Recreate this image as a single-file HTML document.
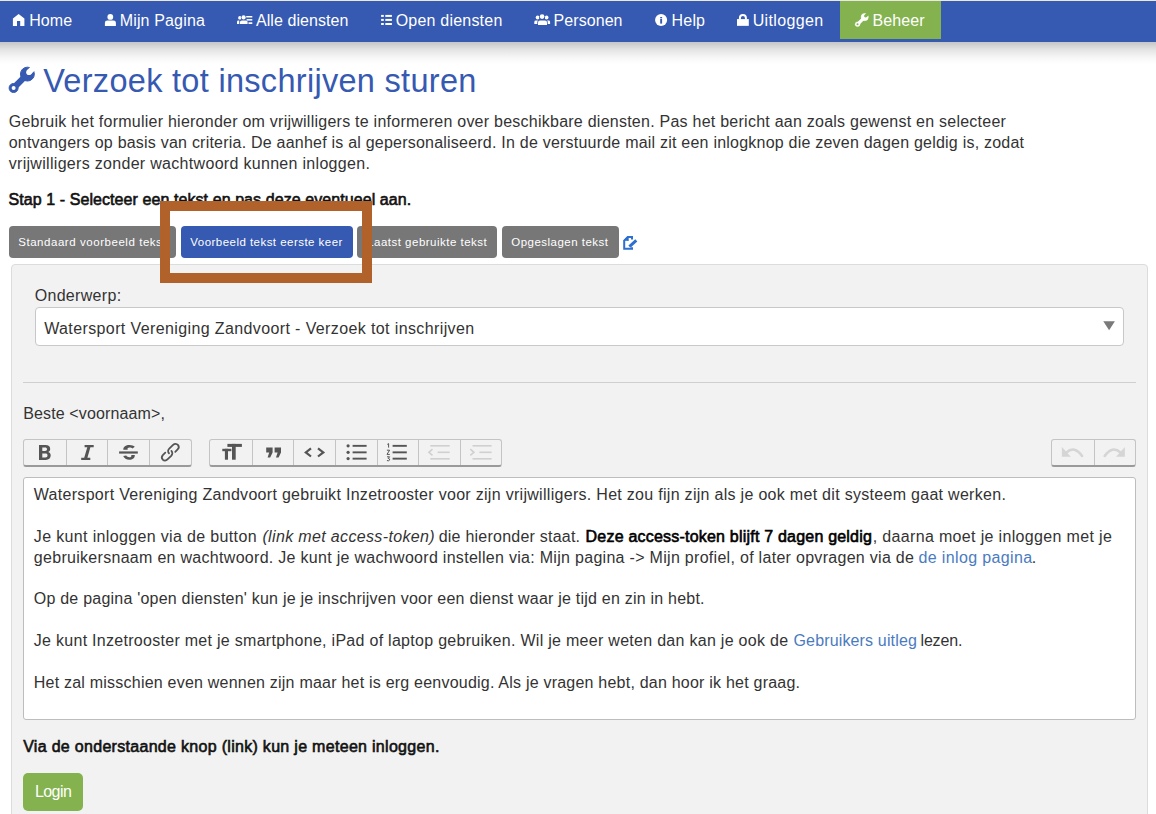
<!DOCTYPE html>
<html><head><meta charset="utf-8">
<style>
html,body{margin:0;padding:0;width:1156px;height:814px;overflow:hidden;background:#fff;font-family:"Liberation Sans",sans-serif;}
.t{position:absolute;white-space:pre;}
.abs{position:absolute;}
#topline{left:0;top:0;width:1156px;height:1px;background:#ebe8e4;}
#nav{left:0;top:1px;width:1156px;height:41px;background:#3659b1;}
#navshadow{left:0;top:42px;width:1156px;height:22px;background:linear-gradient(#c6c6c6,#e4e4e4 35%,#f6f6f6 70%,#fff);}
#beheer{left:840px;top:1px;width:101px;height:38px;background:#83b24f;}
.btn{position:absolute;top:226px;height:32px;border-radius:4px;background:#777;}
#panel{left:11px;top:264px;width:1135px;height:600px;background:#f2f2f2;border:1px solid #dcdcdc;border-radius:4px;}
#subject{left:35px;top:307px;width:1087px;height:37px;background:#fff;border:1px solid #c8c8c8;border-radius:4px;}
#hr{left:23px;top:382px;width:1113px;height:1px;background:#cfcfcf;}
.tb{position:absolute;top:439px;height:25px;border:1px solid #c4c4c4;border-bottom:2px solid #9a9a9a;border-radius:3px;background:#f2f2f2;}
.div{position:absolute;top:0;width:1px;height:25px;background:#c4c4c4;}
#editor{left:23px;top:477px;width:1111px;height:241px;background:#fff;border:1px solid #bdbdbd;border-radius:3px;}
#login{left:23px;top:773px;width:60px;height:38px;background:#83b24f;border-radius:5px;}
#orange{left:160px;top:201px;width:192px;height:62px;border:10px solid #b1612a;}
svg{position:absolute;overflow:visible;}
</style></head><body>
<div id="topline" class="abs"></div>
<div id="nav" class="abs"></div>
<div id="navshadow" class="abs"></div>
<div id="beheer" class="abs"></div>

<div class="btn" style="left:9px;width:167px"></div>
<div class="btn" style="left:181px;width:172px;background:#3659b1"></div>
<div class="btn" style="left:357px;width:140px"></div>
<div class="btn" style="left:502px;width:117px"></div>

<div id="panel" class="abs"></div>
<div id="subject" class="abs"></div>
<div id="hr" class="abs"></div>

<div class="tb" style="left:23px;width:167px"><div class="div" style="left:42px"></div><div class="div" style="left:83px"></div><div class="div" style="left:125px"></div></div>
<div class="tb" style="left:209px;width:291px"><div class="div" style="left:42px"></div><div class="div" style="left:83px"></div><div class="div" style="left:125px"></div><div class="div" style="left:167px"></div><div class="div" style="left:208px"></div><div class="div" style="left:250px"></div></div>
<div class="tb" style="left:1051px;width:83px"><div class="div" style="left:42px"></div></div>

<div id="editor" class="abs"></div>
<div id="login" class="abs"></div>

<svg width="1156" height="814" style="left:0;top:0" viewBox="0 0 1156 814">
<defs>
<g id="wrench">
<mask id="wm"><rect x="-5" y="-5" width="40" height="40" fill="#fff"/><circle cx="19.9" cy="5.2" r="2.8" fill="#000"/><polygon points="17.9,3.2 28.3,-7.2 32.3,-3.2 21.9,7.2" fill="#000"/><circle cx="4.5" cy="20.9" r="2.0" fill="#000"/></mask>
<g mask="url(#wm)">
<circle cx="18.3" cy="7.0" r="6.95"/>
<path d="M18.3,7 L4.5,20.9" stroke-width="6.2" stroke-linecap="round"/>
<circle cx="4.5" cy="20.9" r="4.5"/>
</g>
</g>
</defs>
<!-- nav icons -->
<g fill="#fff">
<polygon points="12.9,18.4 18.65,13.9 24.4,18.4 24.4,26 20.2,26 20.2,21 17,21 17,26 12.9,26"/>
<circle cx="110.3" cy="16.9" r="2.9"/>
<path d="M104.9,26 V22.8 Q104.9,20.5 107.4,20.5 H113.4 Q115.9,20.5 115.9,22.8 V26 Z"/>
<circle cx="239.9" cy="17.9" r="1.8"/>
<path d="M237,24 V21.8 Q237,20.5 238.4,20.5 H240.5 V24 Z"/>
<circle cx="243.6" cy="17.4" r="2.7" fill="#3659b1"/>
<rect x="239.3" y="19.7" width="9" height="5" fill="#3659b1"/>
<circle cx="243.6" cy="17.4" r="2.1"/>
<path d="M240,24 V22 Q240,20.4 241.7,20.4 H245.9 Q247.6,20.4 247.6,22 V24 Z"/>
<rect x="246.2" y="16" width="6.1" height="1.5"/>
<rect x="246.6" y="19.1" width="5.7" height="1.5"/>
<rect x="248.5" y="22.3" width="3.8" height="1.7"/>
<rect x="381.1" y="14.9" width="2.7" height="2"/><rect x="385.3" y="14.9" width="6.6" height="2"/>
<rect x="381.1" y="18.9" width="2.7" height="2"/><rect x="385.3" y="18.9" width="6.6" height="2"/>
<rect x="381.1" y="23" width="2.7" height="2"/><rect x="385.3" y="23" width="6.6" height="2"/>
<circle cx="537.6" cy="17.5" r="1.9"/>
<path d="M534.3,24 V22 Q534.3,20.6 535.8,20.6 H538.5 V24 Z"/>
<circle cx="546.6" cy="17.5" r="1.9"/>
<path d="M546,24 V20.6 H548.6 Q550.1,20.6 550.1,22 V24 Z"/>
<circle cx="542.1" cy="16.6" r="3.0" fill="#3659b1"/>
<path d="M537.3,25.5 V22.1 Q537.3,19.7 539.8,19.7 H544.6 Q547.7,19.7 547.7,22.1 V25.5 Z" fill="#3659b1"/>
<circle cx="542.1" cy="16.6" r="2.35"/>
<path d="M538,25 V22.3 Q538,20.4 540,20.4 H545 Q547,20.4 547,22.3 V25 Z"/>
<circle cx="661.1" cy="19.95" r="6.05"/>
<rect x="737" y="19.1" width="11.8" height="6.75"/>
<path d="M739.9,19.6 V17.9 A3,3 0 0 1 745.9,17.9 V19.6" fill="none" stroke="#fff" stroke-width="2"/>
<use href="#wrench" transform="translate(855.2,13.4) scale(0.52)" stroke="#fff"/>
</g>
<rect x="660.2" y="17.0" width="1.9" height="1.2" fill="#3659b1"/>
<rect x="660.2" y="18.8" width="1.9" height="4.8" fill="#3659b1"/>
<!-- title wrench -->
<use href="#wrench" transform="translate(9.1,67.1)" fill="#3659b1" stroke="#3659b1"/>
<!-- edit icon -->
<g fill="#2d6fd1" stroke="#2d6fd1">
<path d="M632,239.6 V237 H627.8 L624.2,240.6 V248.8 H632 V247.2" fill="none" stroke-width="2"/>
<polygon points="623.4,240.6 627.4,236.2 628.7,236.2 628.7,240.9" stroke="none"/>
<path d="M629.4,246.6 L636.3,240.3" stroke-width="3"/>
</g>
<!-- dropdown -->
<polygon points="1103.3,321.3 1114.9,321.3 1109.1,330.2" fill="#7a7a7a"/>
<!-- toolbar -->
<g fill="#555" stroke="none">
<path fill-rule="evenodd" d="M39,445 H45.5 C48.6,445 50.2,446.6 50.2,449 C50.2,450.5 49.4,451.5 48.2,452.1 C49.8,452.6 50.7,453.9 50.7,455.6 C50.7,458.3 48.8,460 45.8,460 H39 Z M42.3,447.6 V451 H45 C46.3,451 47,450.4 47,449.3 C47,448.2 46.3,447.6 45,447.6 Z M42.3,453.5 V457.4 H45.4 C46.8,457.4 47.5,456.7 47.5,455.4 C47.5,454.1 46.8,453.5 45.4,453.5 Z"/>
<path d="M84.6,445 H93.7 V447.3 H90.4 L87.4,457.7 H90.3 V460 H81.2 V457.7 H84.2 L87.3,447.3 H84.6 Z"/>
<path d="M123.3,449.8 C123.1,446.6 125.9,444.9 129.5,444.9 C131.8,444.9 133.6,445.6 134.8,446.7 L132.5,448.6 C131.8,447.8 130.8,447.5 129.6,447.5 C128,447.5 127.1,448.3 127.7,449.8 Z"/>
<path d="M123.2,456.1 L126.2,455.6 C127,456.9 128.1,457.3 129.3,457.3 C130.9,457.3 131.7,456.4 131.3,455 L134.8,455 C135,458.1 132.6,459.8 129.2,459.8 C126.4,459.8 124.2,458.5 123.2,456.1 Z"/>
<rect x="119.1" y="451.4" width="18.7" height="2.2"/>
<path transform="translate(170,452.4) scale(0.94) translate(-170,-452.4)" d="M168.9,453.3 C167.5,451.9 167.7,449.8 169.2,448.3 L173.3,444.3 C174.9,442.8 177.1,442.9 178.4,444.4 C179.7,445.9 179.5,447.9 178.1,449.3 L175.6,451.8 M165,452.6 L162.6,455 C161.1,456.5 161,458.6 162.3,460 C163.7,461.4 165.8,461.4 167.3,459.9 L171.3,456 C172.8,454.5 172.9,452.3 171.5,450.9" fill="none" stroke="#555" stroke-width="1.9" stroke-linecap="round"/>
<rect x="222.3" y="448.8" width="9.1" height="2.4"/><rect x="224.9" y="448.8" width="3.1" height="10.9"/>
<rect x="227.4" y="443.9" width="14.5" height="3"/><rect x="232" y="443.9" width="3.7" height="15.8"/>
<path d="M266.2,447.4 H272.6 V452.5 L270.2,457.6 H267.6 L269.2,452.5 H266.2 Z"/>
<path d="M274.6,447.4 H281 V452.5 L278.6,457.6 H276 L277.6,452.5 H274.6 Z"/>
<path d="M311,448.3 L305.8,452.4 L311,456.5 M318,448.3 L323.3,452.4 L318,456.5" fill="none" stroke="#555" stroke-width="2.2"/>
<circle cx="348.1" cy="445.8" r="1.6"/><circle cx="348.1" cy="452.3" r="1.6"/><circle cx="348.1" cy="458.6" r="1.6"/>
<rect x="352.6" y="444.9" width="14" height="1.9"/><rect x="352.6" y="451.4" width="14" height="1.9"/><rect x="352.6" y="457.7" width="14" height="1.9"/>
<path d="M387.3,444.4 L388.6,443.6 V447.6 M386.9,450.2 H389.6 L387,454.4 H389.8 M387,456.8 H389.6 L388.2,458.4 Q389.9,458.6 389.7,460 Q389.2,461.2 386.9,460.6" fill="none" stroke="#555" stroke-width="1"/>
<rect x="392.6" y="444.9" width="14.2" height="1.9"/><rect x="392.6" y="451.4" width="14.2" height="1.9"/><rect x="392.6" y="457.7" width="14.2" height="1.9"/>
</g>
<g fill="#d0d0d0">
<rect x="430.3" y="445" width="19.4" height="1.6"/><rect x="437.6" y="451.5" width="12.1" height="1.6"/><rect x="430.3" y="458" width="19.4" height="1.6"/>
<path d="M432.5,449.2 L428.9,452.3 L432.5,455.4" fill="none" stroke="#d0d0d0" stroke-width="1.6"/>
<rect x="472.5" y="445" width="19.1" height="1.6"/><rect x="479.4" y="451.5" width="12.2" height="1.6"/><rect x="472.5" y="458" width="19.1" height="1.6"/>
<path d="M470.3,449.2 L473.9,452.3 L470.3,455.4" fill="none" stroke="#d0d0d0" stroke-width="1.6"/>
</g>
<g fill="#d5d5d5">
<polygon points="1061.9,447 1061.9,456.8 1070.8,456.8"/>
<path d="M1066.2,452.6 Q1074.5,445 1082.1,456" fill="none" stroke="#d5d5d5" stroke-width="2.6" stroke-linecap="round"/>
<polygon points="1124.9,447 1124.9,456.8 1116,456.8"/>
<path d="M1120.6,452.6 Q1112.3,445 1104.7,456" fill="none" stroke="#d5d5d5" stroke-width="2.6" stroke-linecap="round"/>
</g>
</svg>

<div class="t" style="left:29.2px;top:10.5px;font-size:16px;line-height:20px;letter-spacing:0.078px;color:#fff">Home</div>
<div class="t" style="left:119.7px;top:10.5px;font-size:16px;line-height:20px;letter-spacing:0.154px;color:#fff">Mijn Pagina</div>
<div class="t" style="left:256.0px;top:10.5px;font-size:16px;line-height:20px;letter-spacing:0.060px;color:#fff">Alle diensten</div>
<div class="t" style="left:395.7px;top:10.5px;font-size:16px;line-height:20px;letter-spacing:0.209px;color:#fff">Open diensten</div>
<div class="t" style="left:553.6px;top:10.5px;font-size:16px;line-height:20px;letter-spacing:0.062px;color:#fff">Personen</div>
<div class="t" style="left:671.6px;top:10.5px;font-size:16px;line-height:20px;letter-spacing:0.173px;color:#fff">Help</div>
<div class="t" style="left:752.7px;top:10.5px;font-size:16px;line-height:20px;letter-spacing:0.355px;color:#fff">Uitloggen</div>
<div class="t" style="left:872.6px;top:10.5px;font-size:16px;line-height:20px;letter-spacing:0.068px;color:#fff">Beheer</div>
<div class="t" style="left:43.2px;top:61.2px;font-size:32.5px;line-height:41px;letter-spacing:0.299px;color:#3659b1">Verzoek tot inschrijven sturen</div>
<div class="t" style="left:8.7px;top:111.8px;font-size:16px;line-height:20px;letter-spacing:0.246px;color:#333">Gebruik het formulier hieronder om vrijwilligers te informeren over beschikbare diensten. Pas het bericht aan zoals gewenst en selecteer</div>
<div class="t" style="left:8.7px;top:132.8px;font-size:16px;line-height:20px;letter-spacing:0.221px;color:#333">ontvangers op basis van criteria. De aanhef is al gepersonaliseerd. In de verstuurde mail zit een inlogknop die zeven dagen geldig is, zodat</div>
<div class="t" style="left:8.7px;top:153.8px;font-size:16px;line-height:20px;letter-spacing:0.305px;color:#333">vrijwilligers zonder wachtwoord kunnen inloggen.</div>
<div class="t" style="left:8.5px;top:190.1px;font-size:16px;line-height:20px;letter-spacing:0.078px;color:#111"><span style="-webkit-text-stroke:0.6px #111">Stap 1 - Selecteer een tekst en pas deze eventueel aan.</span></div>
<div class="t" style="left:18.2px;top:234.7px;font-size:11.5px;line-height:14px;letter-spacing:0.549px;color:#fff">Standaard voorbeeld tekst</div>
<div class="t" style="left:190.3px;top:234.7px;font-size:11.5px;line-height:14px;letter-spacing:0.463px;color:#fff">Voorbeeld tekst eerste keer</div>
<div class="t" style="left:367.2px;top:234.7px;font-size:11.5px;line-height:14px;letter-spacing:0.486px;color:#fff">Laatst gebruikte tekst</div>
<div class="t" style="left:511.3px;top:234.7px;font-size:11.5px;line-height:14px;letter-spacing:0.480px;color:#fff">Opgeslagen tekst</div>
<div class="t" style="left:34.7px;top:285.7px;font-size:16px;line-height:20px;letter-spacing:0.311px;color:#333">Onderwerp:</div>
<div class="t" style="left:44.2px;top:318.8px;font-size:16px;line-height:20px;letter-spacing:0.384px;color:#333">Watersport Vereniging Zandvoort - Verzoek tot inschrijven</div>
<div class="t" style="left:23.2px;top:403.5px;font-size:16px;line-height:20px;letter-spacing:0.127px;color:#333">Beste &lt;voornaam&gt;,</div>
<div class="t" style="left:33.8px;top:485.0px;font-size:16px;line-height:20px;letter-spacing:0.295px;color:#333">Watersport Vereniging Zandvoort gebruikt Inzetrooster voor zijn vrijwilligers. Het zou fijn zijn als je ook met dit systeem gaat werken.</div>
<div class="t" style="left:33.8px;top:526.9px;font-size:16px;line-height:20px;letter-spacing:0.350px;color:#333">Je kunt inloggen via de button</div>
<div class="t" style="left:262.4px;top:526.9px;font-size:16px;line-height:20px;letter-spacing:0.352px;color:#333"><span style="font-style:italic">(link met access-token)</span></div>
<div class="t" style="left:438.7px;top:526.9px;font-size:16px;line-height:20px;letter-spacing:0.231px;color:#333">die hieronder staat.</div>
<div class="t" style="left:585.6px;top:526.9px;font-size:16px;line-height:20px;letter-spacing:0.208px;color:#000"><span style="-webkit-text-stroke:0.6px #000">Deze access-token blijft 7 dagen geldig</span></div>
<div class="t" style="left:872.7px;top:526.9px;font-size:16px;line-height:20px;letter-spacing:0.341px;color:#333">, daarna moet je inloggen met je</div>
<div class="t" style="left:33.8px;top:547.9px;font-size:16px;line-height:20px;letter-spacing:0.295px;color:#333">gebruikersnaam en wachtwoord. Je kunt je wachwoord instellen via: Mijn pagina -&gt; Mijn profiel, of later opvragen via de</div>
<div class="t" style="left:918.4px;top:547.9px;font-size:16px;line-height:20px;letter-spacing:0.377px;color:#4a7bbf">de inlog pagina</div>
<div class="t" style="left:1031.8px;top:547.9px;font-size:16px;line-height:20px;letter-spacing:0.000px;color:#333">.</div>
<div class="t" style="left:33.8px;top:589.0px;font-size:16px;line-height:20px;letter-spacing:0.220px;color:#333">Op de pagina 'open diensten' kun je je inschrijven voor een dienst waar je tijd en zin in hebt.</div>
<div class="t" style="left:33.8px;top:631.4px;font-size:16px;line-height:20px;letter-spacing:0.285px;color:#333">Je kunt Inzetrooster met je smartphone, iPad of laptop gebruiken. Wil je meer weten dan kan je ook de</div>
<div class="t" style="left:793.5px;top:631.4px;font-size:16px;line-height:20px;letter-spacing:0.150px;color:#4a7bbf">Gebruikers uitleg</div>
<div class="t" style="left:920.5px;top:631.4px;font-size:16px;line-height:20px;letter-spacing:-0.167px;color:#333">lezen.</div>
<div class="t" style="left:33.8px;top:673.4px;font-size:16px;line-height:20px;letter-spacing:0.220px;color:#333">Het zal misschien even wennen zijn maar het is erg eenvoudig. Als je vragen hebt, dan hoor ik het graag.</div>
<div class="t" style="left:23.2px;top:736.5px;font-size:16px;line-height:20px;letter-spacing:0.300px;color:#111"><span style="-webkit-text-stroke:0.6px #111">Via de onderstaande knop (link) kun je meteen inloggen.</span></div>
<div class="t" style="left:34.9px;top:781.5px;font-size:16px;line-height:20px;letter-spacing:-0.551px;color:#fff">Login</div>
<div id="orange" class="abs"></div>
</body></html>
